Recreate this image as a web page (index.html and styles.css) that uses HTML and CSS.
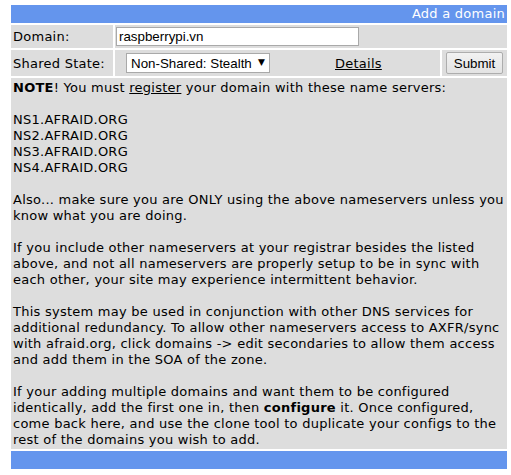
FILE: index.html
```html
<!DOCTYPE html>
<html>
<head>
<meta charset="utf-8">
<link rel="stylesheet" href="styles.css">
</head>
<body>
<div class="panel">
  <div class="bar head">Add a domain</div>
  <div class="row row1">
    <div class="cell label">Domain:</div>
    <div class="cell field"><input class="text-in" type="text" value="raspberrypi.vn"></div>
  </div>
  <div class="row row2">
    <div class="cell label">Shared State:</div>
    <div class="cell mid">
      <span class="sel-wrap"><select class="sel"><option>Non-Shared: Stealth</option></select></span>
      <a class="details" href="#">Details</a>
    </div>
    <div class="cell btn-cell"><button class="btn" type="button">Submit</button></div>
  </div>
  <div class="cell note">
    <b>NOTE</b>! You must <a href="#">register</a> your domain with these name servers:<br>
    <br>
    NS1.AFRAID.ORG<br>
    NS2.AFRAID.ORG<br>
    NS3.AFRAID.ORG<br>
    NS4.AFRAID.ORG<br>
    <br>
    Also... make sure you are ONLY using the above nameservers unless you<br>
    know what you are doing.<br>
    <br>
    If you include other nameservers at your registrar besides the listed<br>
    above, and not all nameservers are properly setup to be in sync with<br>
    each other, your site may experience intermittent behavior.<br>
    <br>
    This system may be used in conjunction with other DNS services for<br>
    additional redundancy. To allow other nameservers access to AXFR/sync<br>
    with afraid.org, click domains -&gt; edit secondaries to allow them access<br>
    and add them in the SOA of the zone.<br>
    <br>
    If your adding multiple domains and want them to be configured<br>
    identically, add the first one in, then <b>configure</b> it. Once configured,<br>
    come back here, and use the clone tool to duplicate your configs to the<br>
    rest of the domains you wish to add.
  </div>
  <div class="bar foot"></div>
</div>
</body>
</html>
```
FILE: styles.css
```css
html, body {
  margin: 0;
  padding: 0;
  background: #ffffff;
}
body {
  padding: 5px 0 0 11px;
  font-family: "DejaVu Sans", Verdana, sans-serif;
  font-size: 13px;
  color: #000;
}
.panel {
  width: 496px;
  display: flex;
  flex-direction: column;
  gap: 2px;
}
.bar {
  height: 18px;
  background: #6495ed;
}
.head {
  color: #fff;
  text-align: right;
  line-height: 18px;
  padding-right: 2px;
  letter-spacing: 0.25px;
}
.row {
  display: grid;
  gap: 2px;
}
.row1 {
  grid-template-columns: 102px 1fr;
  height: 23px;
}
.row2 {
  grid-template-columns: 102px 1fr 65px;
  height: 26px;
}
.cell {
  background: #dddddd;
}
.label {
  display: flex;
  align-items: center;
  padding-left: 2px;
  letter-spacing: 0.25px;
}
.field {
  display: flex;
  align-items: center;
  padding-left: 1px;
}
.text-in {
  box-sizing: border-box;
  width: 243px;
  height: 19px;
  margin: 0;
  padding: 0 2px;
  border: 1px solid #a9a9a9;
  background: #fff;
  font-family: "Liberation Sans", Arial, sans-serif;
  font-size: 13.33px;
  color: #000;
}
.mid {
  display: flex;
  align-items: center;
  padding-left: 11px;
}
.sel-wrap {
  position: relative;
  display: inline-block;
}
.sel {
  box-sizing: border-box;
  width: 144px;
  height: 20px;
  margin: 0;
  padding: 0 0 0 4px;
  border: 1px solid #a9a9a9;
  background: #fff;
  -webkit-appearance: none;
  appearance: none;
  font-family: "Liberation Sans", Arial, sans-serif;
  font-size: 13.33px;
  color: #000;
}
.sel-wrap::after {
  content: "▼";
  position: absolute;
  right: 5px;
  top: 4px;
  font-family: "DejaVu Sans", sans-serif;
  font-size: 9px;
  color: #000;
  pointer-events: none;
}
.details {
  margin-left: 65px;
  color: #000;
  letter-spacing: 0.25px;
}
.btn-cell {
  display: flex;
  align-items: center;
  padding-left: 4px;
}
.btn {
  box-sizing: border-box;
  width: 57px;
  height: 22px;
  margin: 0;
  padding: 0;
  border: 1px solid #adadad;
  border-radius: 2px;
  background: linear-gradient(#f2f2f2, #e3e3e3);
  font-family: "Liberation Sans", Arial, sans-serif;
  font-size: 13.33px;
  color: #000;
}
.note {
  padding: 2px 2px 1px 2px;
  line-height: 16px;
  letter-spacing: 0.25px;
  white-space: nowrap;
}
.note a {
  color: #000;
}
```
